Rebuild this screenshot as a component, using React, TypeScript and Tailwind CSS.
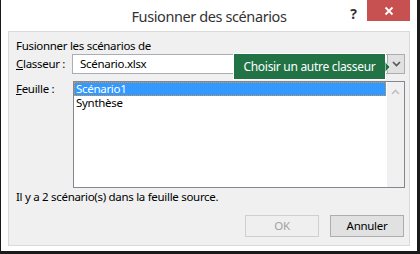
import React from "react";

const font = { fontFamily: '"Noto Sans", "Open Sans", sans-serif' };

export default function App() {
  return (
    <div
      className="w-[420px] h-[254px] bg-white border-l border-r-[3px] border-b-[3px] border-[#1a1a1a] flex flex-col"
      style={font}
    >
      {/* Title bar */}
      <div className="h-[31px] shrink-0 grid grid-cols-[1fr_auto_1fr]">
        <div />
        <div className="pt-[6px] text-[14.5px] leading-[20px] text-[#333333] tracking-[-0.4px]">
          Fusionner des scénarios
        </div>
        <div className="flex justify-end items-start pr-[7px]">
          <div className="pt-[5px] mr-[10px] text-[14px] leading-[18px] font-bold text-[#333333]">?</div>
          <div className="w-[43px] h-[21px] bg-[#c75050] flex items-center justify-center">
            <svg width="10" height="10" viewBox="0 0 10 10">
              <path d="M1.5 1.5 L8.5 8.5 M8.5 1.5 L1.5 8.5" stroke="white" strokeWidth="1.8" />
            </svg>
          </div>
        </div>
      </div>

      {/* Panel */}
      <div className="relative mx-[7px] h-[215px] shrink-0 border border-[#dadada] bg-[#f0f0f0] pl-[7px] pr-[4px] pt-[6px] flex flex-col text-[11.5px] leading-[16px] text-black tracking-[-0.3px]">
        <div>Fusionner les scénarios de</div>

        <div className="flex items-center h-[20px]">
          <div className="w-[56px] shrink-0">
            <span className="underline">C</span>lasseur :
          </div>
          <div className="flex-1 h-[20px] border border-[#abadb3] bg-white flex">
            <div className="flex-1 pl-[7px] leading-[18px]">Scénario.xlsx</div>
            <div className="w-[17px] border-l border-[#acacac] bg-[#e1e1e1] flex items-center justify-center">
              <svg width="9" height="6" viewBox="0 0 9 6">
                <path d="M1 1 L4.5 4.5 L8 1" stroke="#555" strokeWidth="1.6" fill="none" />
              </svg>
            </div>
          </div>
        </div>

        <div className="flex items-start mt-[7px]">
          <div className="w-[57px] shrink-0">
            <span className="underline">F</span>euille :
          </div>
          <div className="flex-1 h-[107px] border border-[#828790] bg-white flex">
            <div className="flex-1 pr-[1px]">
              <div className="h-[14px] leading-[12px] bg-[#3399ff] text-white border border-dotted border-[#e8902a] pl-[1px] overflow-hidden">
                Scénario1
              </div>
              <div className="h-[13px] leading-[13px] pl-[2px]">Synthèse</div>
            </div>
            <div className="w-[17px] bg-[#f0f0f0] flex flex-col items-center">
              <svg className="mt-[7px]" width="9" height="6" viewBox="0 0 9 6">
                <path d="M1 5 L4.5 1.5 L8 5" stroke="#c2c2c2" strokeWidth="1.6" fill="none" />
              </svg>
            </div>
          </div>
        </div>

        <div className="mt-[1px]">Il y a 2 scénario(s) dans la feuille source.</div>

        <div className="flex justify-end gap-[11px] mr-[1px] mt-[10px]">
          <div className="w-[74px] h-[22px] border border-[#cfcfcf] bg-[#efefef] text-[#a2a2a2] flex items-center justify-center">
            OK
          </div>
          <div className="w-[74px] h-[22px] border border-[#adadad] bg-[#e1e1e1] flex items-center justify-center">
            Annuler
          </div>
        </div>

        {/* Tooltip */}
        <div className="absolute left-[224px] top-[21px] flex items-center">
          <div className="h-[27px] w-[153px] bg-[#217346] border border-white text-white text-[12px] tracking-[-0.3px] flex items-center justify-center">
            Choisir un autre classeur
          </div>
          <svg width="6" height="12" viewBox="0 0 6 12" className="-ml-[1px]">
            <path d="M0 0.5 L5.3 6 L0 11.5 Z" fill="#217346" stroke="white" strokeWidth="1" />
          </svg>
        </div>
      </div>
    </div>
  );
}
